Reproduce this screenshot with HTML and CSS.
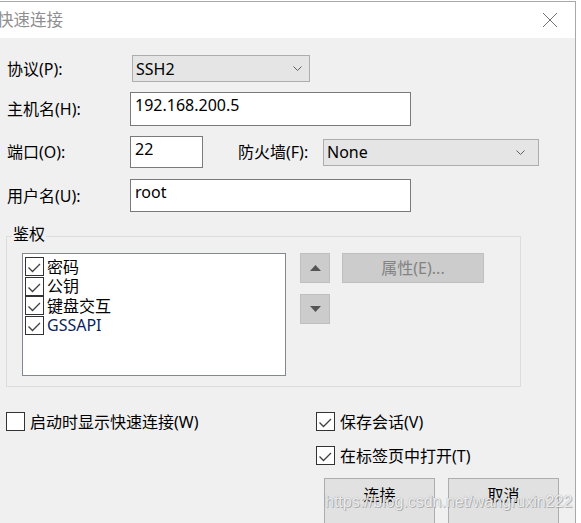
FILE: index.html
```html
<!DOCTYPE html>
<html lang="zh-CN">
<head>
<meta charset="utf-8">
<title>快速连接</title>
<link rel="stylesheet" href="styles.css">
</head>
<body>
<div class="window">
  <div class="titlebar">
    <span class="title">快速连接</span>
    <svg class="close" width="16" height="16" viewBox="0 0 16 16"><path d="M1 1 L15 15 M15 1 L1 15" stroke="#707070" stroke-width="1" fill="none"/></svg>
  </div>
  <div class="content">
    <div class="row r1">
      <span class="lbl">协议(P):</span>
      <div class="select sel-proto"><span>SSH2</span><svg class="chev" width="9" height="5" viewBox="0 0 9 5"><path d="M0.5 0.5 L4.5 4.5 L8.5 0.5" stroke="#606060" fill="none"/></svg></div>
    </div>
    <div class="row r2">
      <span class="lbl">主机名(H):</span>
      <div class="input w-long">192.168.200.5</div>
    </div>
    <div class="row r3">
      <span class="lbl">端口(O):</span>
      <div class="input w-port">22</div>
      <span class="lbl-fw">防火墙(F):</span>
      <div class="select sel-fw"><span>None</span><svg class="chev" width="9" height="5" viewBox="0 0 9 5"><path d="M0.5 0.5 L4.5 4.5 L8.5 0.5" stroke="#606060" fill="none"/></svg></div>
    </div>
    <div class="row r4">
      <span class="lbl">用户名(U):</span>
      <div class="input w-long">root</div>
    </div>

    <div class="group">
      <span class="legend">鉴权</span>
      <div class="listbox">
        <div class="item"><span class="cb"><svg width="19" height="19" viewBox="0 0 19 19"><polyline points="3.5,10.5 7.5,14.5 15,7" stroke="#404040" stroke-width="1.3" fill="none"/></svg></span><span>密码</span></div>
        <div class="item"><span class="cb"><svg width="19" height="19" viewBox="0 0 19 19"><polyline points="3.5,10.5 7.5,14.5 15,7" stroke="#404040" stroke-width="1.3" fill="none"/></svg></span><span>公钥</span></div>
        <div class="item"><span class="cb"><svg width="19" height="19" viewBox="0 0 19 19"><polyline points="3.5,10.5 7.5,14.5 15,7" stroke="#404040" stroke-width="1.3" fill="none"/></svg></span><span>键盘交互</span></div>
        <div class="item"><span class="cb"><svg width="19" height="19" viewBox="0 0 19 19"><polyline points="3.5,10.5 7.5,14.5 15,7" stroke="#404040" stroke-width="1.3" fill="none"/></svg></span><span class="gss">GSSAPI</span></div>
      </div>
      <div class="arrows">
        <div class="sbtn"><svg width="11" height="6" viewBox="0 0 11 6"><polygon points="0,6 11,6 5.5,0" fill="#555"/></svg></div>
        <div class="sbtn down"><svg width="11" height="6" viewBox="0 0 11 6"><polygon points="0,0 11,0 5.5,6" fill="#555"/></svg></div>
      </div>
      <div class="sbtn prop">属性(E)...</div>
    </div>

    <div class="bottom">
      <div class="col-left">
        <div class="chk"><span class="cb"></span><span>启动时显示快速连接(W)</span></div>
      </div>
      <div class="col-right">
        <div class="chk"><span class="cb"><svg width="19" height="19" viewBox="0 0 19 19"><polyline points="3.5,10.5 7.5,14.5 15,7" stroke="#404040" stroke-width="1.3" fill="none"/></svg></span><span>保存会话(V)</span></div>
        <div class="chk chk2"><span class="cb"><svg width="19" height="19" viewBox="0 0 19 19"><polyline points="3.5,10.5 7.5,14.5 15,7" stroke="#404040" stroke-width="1.3" fill="none"/></svg></span><span>在标签页中打开(T)</span></div>
        <div class="buttons">
          <div class="btn">连接</div>
          <div class="btn">取消</div>
        </div>
      </div>
    </div>
  </div>
  <div class="watermark">https://blog.csdn.net/wangruxin222</div>
</div>
</body>
</html>
```

FILE: styles.css
```css
* { box-sizing: border-box; }
html, body { margin: 0; padding: 0; background: #ffffff; }
body {
  width: 581px;
  height: 523px;
  overflow: hidden;
  font-family: "Noto Sans", "Noto Sans CJK SC", sans-serif;
  font-size: 16px;
  line-height: 20px;
  color: #000;
}
.window {
  position: relative;
  margin-top: 1px;
  width: 576px;
  height: 540px;
  border-top: 1px solid #a8a8a8;
  border-right: 1px solid #a8a8a8;
  display: flex;
  flex-direction: column;
}
.titlebar {
  height: 36px;
  flex: none;
  background: #fff;
  display: flex;
  align-items: center;
  justify-content: space-between;
}
.title {
  margin-left: -3px;
  font-size: 16.5px;
  color: #8e8e8e;
}
.close { margin-right: 17px; }
.content {
  flex: 1;
  background: #f0f0f0;
  padding: 17px 0 0 6px;
}
.row { display: flex; align-items: center; }
.lbl { width: 124px; padding-left: 1px; flex: none; }
.r1 { height: 27px; }
.r2 { margin-top: 10px; height: 34px; }
.r3 { margin-top: 10px; height: 32px; }
.r4 { margin-top: 11px; height: 33px; }
.input {
  align-self: stretch;
  background: #fff;
  border: 1px solid #7a7a7a;
  padding: 2px 4px;
}
.w-long { width: 281px; }
.w-port { width: 73px; }
.select {
  display: flex;
  align-items: center;
  justify-content: space-between;
  background: #e5e5e5;
  border: 1px solid #adadad;
  padding: 0 7px 0 3px;
  height: 27px;
}
.sel-proto { margin-left: 2px; width: 178px; }
.lbl-fw { margin-left: 35px; width: 85px; flex: none; }
.sel-fw { width: 216px; padding-right: 13px; }

.group {
  position: relative;
  margin-top: 24px;
  width: 515px;
  height: 151px;
  border: 1px solid #dcdcdc;
  padding: 16px 0 0 15px;
  display: flex;
  align-items: flex-start;
}
.legend {
  position: absolute;
  top: -13px;
  left: 5px;
  padding: 0 1px;
  background: #f0f0f0;
}
.listbox {
  width: 264px;
  height: 123px;
  background: #fff;
  border: 1px solid #828790;
  padding: 3px 0 0 2px;
}
.item {
  height: 19.5px;
  display: flex;
  align-items: center;
  gap: 3px;
}
.gss { color: #0c1f5c; }
.cb {
  flex: none;
  width: 19px;
  height: 19px;
  background: #fff;
  border: 1px solid #333;
  display: flex;
  align-items: center;
  justify-content: center;
}
.cb svg { flex: none; }
.arrows { margin-left: 14px; display: flex; flex-direction: column; }
.sbtn {
  width: 30px;
  height: 30px;
  background: #cccccc;
  border: 1px solid #bfbfbf;
  display: flex;
  align-items: center;
  justify-content: center;
}
.down { margin-top: 11px; }
.prop {
  margin-left: 12px;
  width: 142px;
  color: #838383;
}

.bottom { display: flex; margin-top: 25px; }
.col-left { width: 310px; flex: none; }
.col-right { display: flex; flex-direction: column; }
.chk { height: 19px; display: flex; align-items: center; gap: 5px; }
.chk2 { margin-top: 15px; }
.buttons { display: flex; gap: 13px; margin-top: 13px; margin-left: 8px; }
.btn {
  width: 111px;
  height: 50px;
  background: #e1e1e1;
  border: 1px solid #adadad;
  padding-top: 6px;
  text-align: center;
}
.watermark {
  position: absolute;
  left: 325px;
  top: 490px;
  font-family: "Liberation Sans", sans-serif;
  font-size: 16px;
  line-height: 20px;
  color: rgba(255, 255, 255, 0.85);
  text-shadow: 0 0 1px #8f8f8f, 1px 1px 0 rgba(140, 140, 140, 0.55);
  white-space: nowrap;
}
```
